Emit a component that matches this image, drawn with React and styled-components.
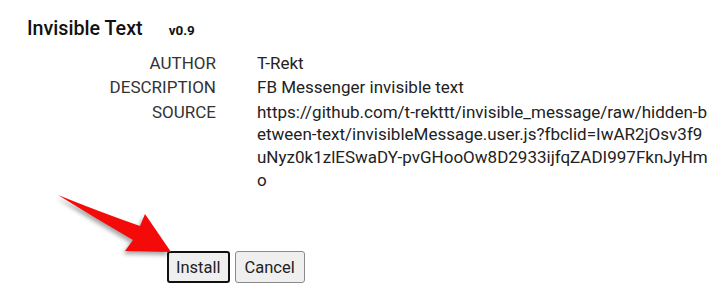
import React from 'react'
import styled, { createGlobalStyle } from 'styled-components'

const GlobalStyle = createGlobalStyle`
    html, body {
        margin: 0;
        padding: 0;
        background: #fff;
    }
    body {
        font-family: Roboto, "Liberation Sans", sans-serif;
        color: #222;
    }
`

const Page = styled.div`
    position: relative;
    width: 722px;
    height: 297px;
    box-sizing: border-box;
    padding: 17px 0 0 27px;
    overflow: hidden;
`

const Header = styled.div`
    display: flex;
    align-items: baseline;
    gap: 26px;
    .title {
        margin: 0;
        font-size: 19.7px;
        font-weight: 500;
        color: #111;
        line-height: 24px;
    }
    .version {
        font-size: 13.5px;
        font-weight: 700;
        color: #111;
    }
`

const Details = styled.dl`
    display: grid;
    grid-template-columns: 189px 453px;
    column-gap: 41px;
    row-gap: 1.6px;
    margin: 11px 0 0 0;
    font-size: 17px;
    line-height: 22.7px;
    dt {
        text-align: right;
        color: #333;
    }
    dd {
        margin: 0;
        color: #222;
        word-break: break-all;
    }
`

const Actions = styled.div`
    display: flex;
    gap: 5px;
    margin: 60px 0 0 140px;
`

const Button = styled.button`
    height: 32px;
    padding: 0 ${p => (p.$focused ? '7px' : '9px')};
    font-family: Roboto, "Liberation Sans", sans-serif;
    font-size: 16.5px;
    color: #222;
    background: #efefef;
    border: ${p => (p.$focused ? '2px solid #111' : '1px solid #8a8a8a')};
    border-radius: 3px;
`

const Arrow = styled.svg`
    position: absolute;
    left: 0;
    top: 0;
    pointer-events: none;
    filter: drop-shadow(-2px 3px 2px rgba(0, 0, 0, 0.35));
`

const rows = [
    ['AUTHOR', 'T-Rekt'],
    ['DESCRIPTION', 'FB Messenger invisible text'],
    ['SOURCE', 'https://github.com/t-rekttt/invisible_message/raw/hidden-between-text/invisibleMessage.user.js?fbclid=IwAR2jOsv3f9uNyz0k1zlESwaDY-pvGHooOw8D2933ijfqZADI997FknJyHmo'],
]

export default function App() {
    return (
        <Page>
            <GlobalStyle />
            <Header>
                <h1 className="title">Invisible Text</h1>
                <span className="version">v0.9</span>
            </Header>
            <Details>
                {rows.map(([label, value]) => (
                    <React.Fragment key={label}>
                        <dt>{label}</dt>
                        <dd>{value}</dd>
                    </React.Fragment>
                ))}
            </Details>
            <Actions>
                <Button $focused>Install</Button>
                <Button>Cancel</Button>
            </Actions>
            <Arrow width="722" height="297" viewBox="0 0 722 297">
                <path
                    d="M58 195 Q100 212 140 226 L145 214 L171 252 L125 251 L133 240 Q95 218 58 195 Z"
                    fill="#f50a0a"
                />
            </Arrow>
        </Page>
    )
}
